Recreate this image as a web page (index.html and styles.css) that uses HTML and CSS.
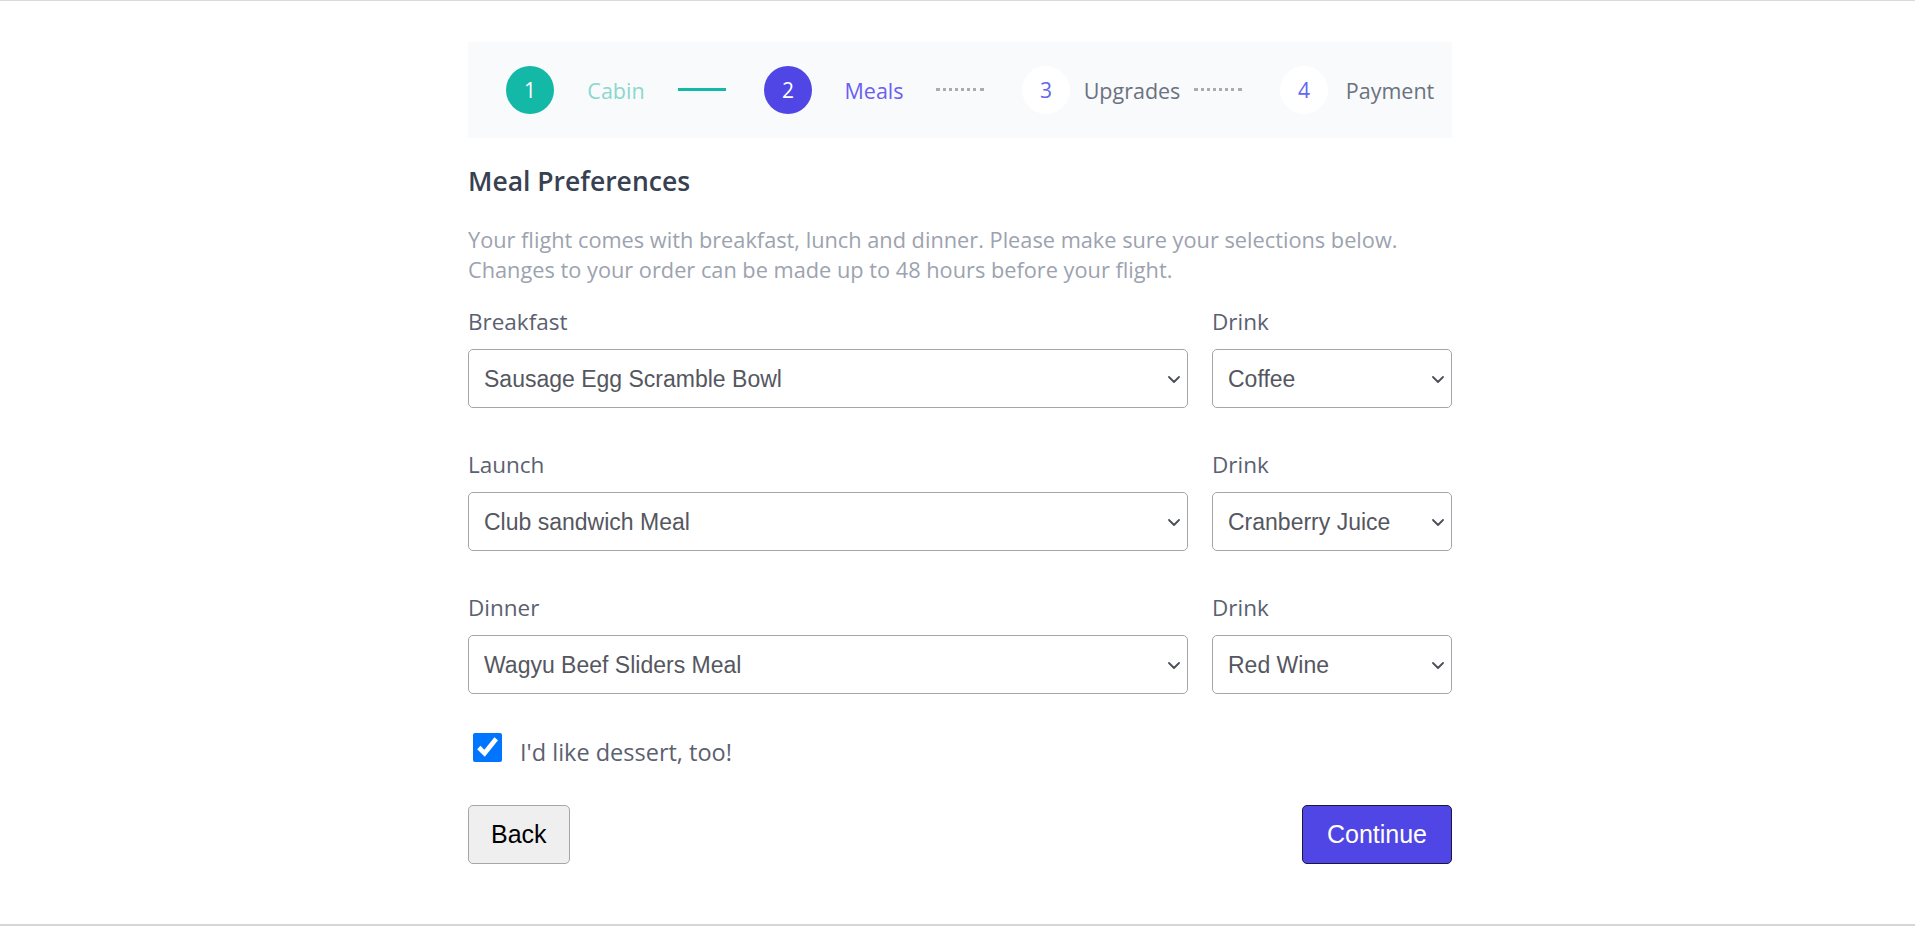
FILE: index.html
```html
<!DOCTYPE html>
<html lang="en">
<head>
<meta charset="utf-8">
<title>Meal Preferences</title>
<link rel="stylesheet" href="styles.css">
</head>
<body>
<div class="page">
  <nav class="stepper">
    <div class="step done">
      <span class="circle">1</span>
      <span class="step-label">Cabin</span>
    </div>
    <span class="connector solid"></span>
    <div class="step current">
      <span class="circle">2</span>
      <span class="step-label">Meals</span>
    </div>
    <span class="connector dotted"></span>
    <div class="step">
      <span class="circle">3</span>
      <span class="step-label">Upgrades</span>
    </div>
    <span class="connector dotted"></span>
    <div class="step">
      <span class="circle">4</span>
      <span class="step-label">Payment</span>
    </div>
  </nav>

  <h2 class="title">Meal Preferences</h2>
  <p class="intro">Your flight comes with breakfast, lunch and dinner. Please make sure your selections below.<br>Changes to your order can be made up to 48 hours before your flight.</p>

  <div class="meal-row">
    <div class="field">
      <label class="field-label">Breakfast</label>
      <div class="select-wrap">
        <select class="select"><option>Sausage Egg Scramble Bowl</option></select>
        <svg class="chevron" viewBox="0 0 12 7" width="12" height="7"><path d="M1 1l5 5 5-5" fill="none" stroke="#4b4f58" stroke-width="1.8" stroke-linecap="round" stroke-linejoin="round"/></svg>
      </div>
    </div>
    <div class="field">
      <label class="field-label">Drink</label>
      <div class="select-wrap">
        <select class="select"><option>Coffee</option></select>
        <svg class="chevron" viewBox="0 0 12 7" width="12" height="7"><path d="M1 1l5 5 5-5" fill="none" stroke="#4b4f58" stroke-width="1.8" stroke-linecap="round" stroke-linejoin="round"/></svg>
      </div>
    </div>
  </div>

  <div class="meal-row">
    <div class="field">
      <label class="field-label">Launch</label>
      <div class="select-wrap">
        <select class="select"><option>Club sandwich Meal</option></select>
        <svg class="chevron" viewBox="0 0 12 7" width="12" height="7"><path d="M1 1l5 5 5-5" fill="none" stroke="#4b4f58" stroke-width="1.8" stroke-linecap="round" stroke-linejoin="round"/></svg>
      </div>
    </div>
    <div class="field">
      <label class="field-label">Drink</label>
      <div class="select-wrap">
        <select class="select"><option>Cranberry Juice</option></select>
        <svg class="chevron" viewBox="0 0 12 7" width="12" height="7"><path d="M1 1l5 5 5-5" fill="none" stroke="#4b4f58" stroke-width="1.8" stroke-linecap="round" stroke-linejoin="round"/></svg>
      </div>
    </div>
  </div>

  <div class="meal-row">
    <div class="field">
      <label class="field-label">Dinner</label>
      <div class="select-wrap">
        <select class="select"><option>Wagyu Beef Sliders Meal</option></select>
        <svg class="chevron" viewBox="0 0 12 7" width="12" height="7"><path d="M1 1l5 5 5-5" fill="none" stroke="#4b4f58" stroke-width="1.8" stroke-linecap="round" stroke-linejoin="round"/></svg>
      </div>
    </div>
    <div class="field">
      <label class="field-label">Drink</label>
      <div class="select-wrap">
        <select class="select"><option>Red Wine</option></select>
        <svg class="chevron" viewBox="0 0 12 7" width="12" height="7"><path d="M1 1l5 5 5-5" fill="none" stroke="#4b4f58" stroke-width="1.8" stroke-linecap="round" stroke-linejoin="round"/></svg>
      </div>
    </div>
  </div>

  <label class="dessert">
    <input type="checkbox" class="check" checked>
    <span class="dessert-text">I'd like dessert, too!</span>
  </label>

  <div class="actions">
    <button class="btn btn-back" type="button">Back</button>
    <button class="btn btn-continue" type="button">Continue</button>
  </div>
</div>
</body>
</html>
```

FILE: styles.css
```css
* { box-sizing: border-box; }

html, body { height: 100%; }

body {
  margin: 0;
  border-top: 1px solid #dadada;
  border-bottom: 2px solid #d6d6d6;
  background: #ffffff;
  font-family: "Open Sans", "Noto Sans", sans-serif;
}

.page {
  width: 989px;
  margin: 0 auto;
  padding-left: 5px;
}

/* Stepper */
.stepper {
  margin-top: 41px;
  height: 96px;
  background: #f9fafb;
  padding-left: 38px;
  display: flex;
  align-items: center;
}

.step {
  display: flex;
  align-items: center;
}

.circle {
  width: 48px;
  height: 48px;
  border-radius: 50%;
  display: flex;
  align-items: center;
  justify-content: center;
  font-size: 21px;
  background: #ffffff;
  color: #6366f1;
}

.step-label {
  width: 124px;
  text-align: center;
  font-size: 21.5px;
  color: #6b7280;
}

.step.done .circle { background: #14b8a6; color: #ffffff; }
.step.done .step-label { color: #8ad8cd; }
.step.current .circle { background: #4f46e5; color: #ffffff; }
.step.current .step-label { color: #6a5ff1; }

.connector {
  width: 48px;
  margin-right: 38px;
  margin-top: -2px;
}
.connector.solid { border-top: 3px solid #14b8a6; }
.connector.dotted { border-top: 3px dotted #a8acb4; }

/* Heading */
.title {
  margin: 26px 0 0;
  font-size: 26.5px;
  line-height: 34px;
  font-weight: 600;
  color: #374151;
}

.intro {
  margin: 27px 0 0;
  font-size: 21.75px;
  line-height: 30px;
  color: #9ca3af;
}

/* Meal rows */
.meal-row {
  display: grid;
  grid-template-columns: 3fr 1fr;
  column-gap: 24px;
  margin-top: 20px;
}
.meal-row + .meal-row { margin-top: 40px; }

.field { display: flex; flex-direction: column; }

.field-label {
  font-size: 22.5px;
  line-height: 34px;
  color: #5b6170;
  margin-bottom: 10px;
}

.select-wrap { position: relative; }

.select {
  -webkit-appearance: none;
  appearance: none;
  width: 100%;
  height: 59px;
  border: 1px solid #a5a5ab;
  border-radius: 5px;
  background: #ffffff;
  padding: 0 30px 0 15px;
  font-family: "Liberation Sans", Arial, sans-serif;
  font-size: 23px;
  color: #55575f;
}

.chevron {
  position: absolute;
  right: 8px;
  top: 27px;
  pointer-events: none;
}

/* Dessert checkbox */
.dessert {
  display: flex;
  align-items: flex-start;
  margin-top: 38px;
  height: 34px;
}

.check {
  width: 29px;
  height: 29px;
  margin: 1px 18px 0 5px;
}

.dessert-text {
  font-size: 23.5px;
  line-height: 36px;
  margin-top: 2px;
  color: #5b6170;
}

/* Buttons */
.actions {
  display: flex;
  justify-content: space-between;
  margin-top: 39px;
}

.btn {
  height: 59px;
  font-family: "Liberation Sans", Arial, sans-serif;
  font-size: 25px;
  border-radius: 5px;
  cursor: pointer;
}

.btn-back {
  padding: 0 22px;
  background: #efefef;
  border: 1px solid #a5a5ab;
  color: #000000;
}

.btn-continue {
  padding: 0 24px;
  background: #4f46e5;
  border: 1px solid #1a1740;
  color: #ffffff;
}
```
